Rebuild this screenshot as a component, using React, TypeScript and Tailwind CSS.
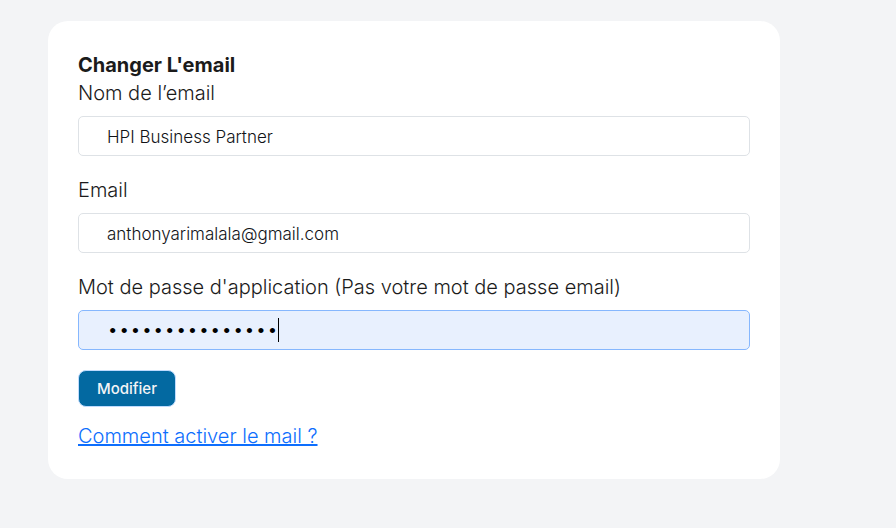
import { useState } from "react";

const fieldClass =
  "block h-10 w-full rounded-[5px] border border-[#dee2e6] bg-white pt-0.5 pr-3 pl-7 text-[17px] font-light text-[#111317] outline-none";

export default function App() {
  const [name, setName] = useState("HPI Business Partner");
  const [email, setEmail] = useState("anthonyarimalala@gmail.com");
  const [password, setPassword] = useState("motdepasse12345");

  return (
    <main className="min-h-screen bg-[#f3f4f6] pt-[21px] pr-[116px] pb-12 pl-12 font-['Inter',sans-serif] text-[#1b1b1b]">
      <form
        className="rounded-[20px] bg-white px-[30px] pt-[30px] pb-[29px] text-xl leading-7 font-light"
        onSubmit={(event) => event.preventDefault()}
      >
        <h1 className="text-xl leading-7 font-bold">Changer L'email</h1>
        <div className="mb-5">
          <label htmlFor="name" className="mb-[9px] block">Nom de l’email</label>
          <input
            id="name"
            type="text"
            className={fieldClass}
            value={name}
            onChange={(event) => setName(event.target.value)}
          />
        </div>
        <div className="mb-5">
          <label htmlFor="email" className="mb-[9px] block">Email</label>
          <input
            id="email"
            type="email"
            className={fieldClass}
            value={email}
            onChange={(event) => setEmail(event.target.value)}
          />
        </div>
        <div className="mb-5">
          <label htmlFor="password" className="mb-[9px] block">
            Mot de passe d'application (Pas votre mot de passe email)
          </label>
          <div className="relative">
            <input
              id="password"
              type="password"
              className="block h-10 w-full rounded-[5px] border border-[#86b7fe] bg-[#e8f0fe] pt-1 pr-3 pl-7 font-['Liberation_Mono',monospace] text-[19px] font-normal text-black outline-none"
              value={password}
              onChange={(event) => setPassword(event.target.value)}
            />
            <span className="absolute top-2 left-[200px] h-6 w-px bg-black" />
          </div>
        </div>
        <button
          type="submit"
          className="mb-[15px] block h-[37px] rounded-lg border border-[#bfdbfe] bg-[#0369a1] px-[18px] text-[15px] leading-5 font-medium text-[#f3f4f6]"
        >
          Modifier
        </button>
        <a href="#activation" className="block w-fit text-[#0d6efd] underline decoration-2 underline-offset-1">
          Comment activer le mail ?
        </a>
      </form>
    </main>
  );
}
